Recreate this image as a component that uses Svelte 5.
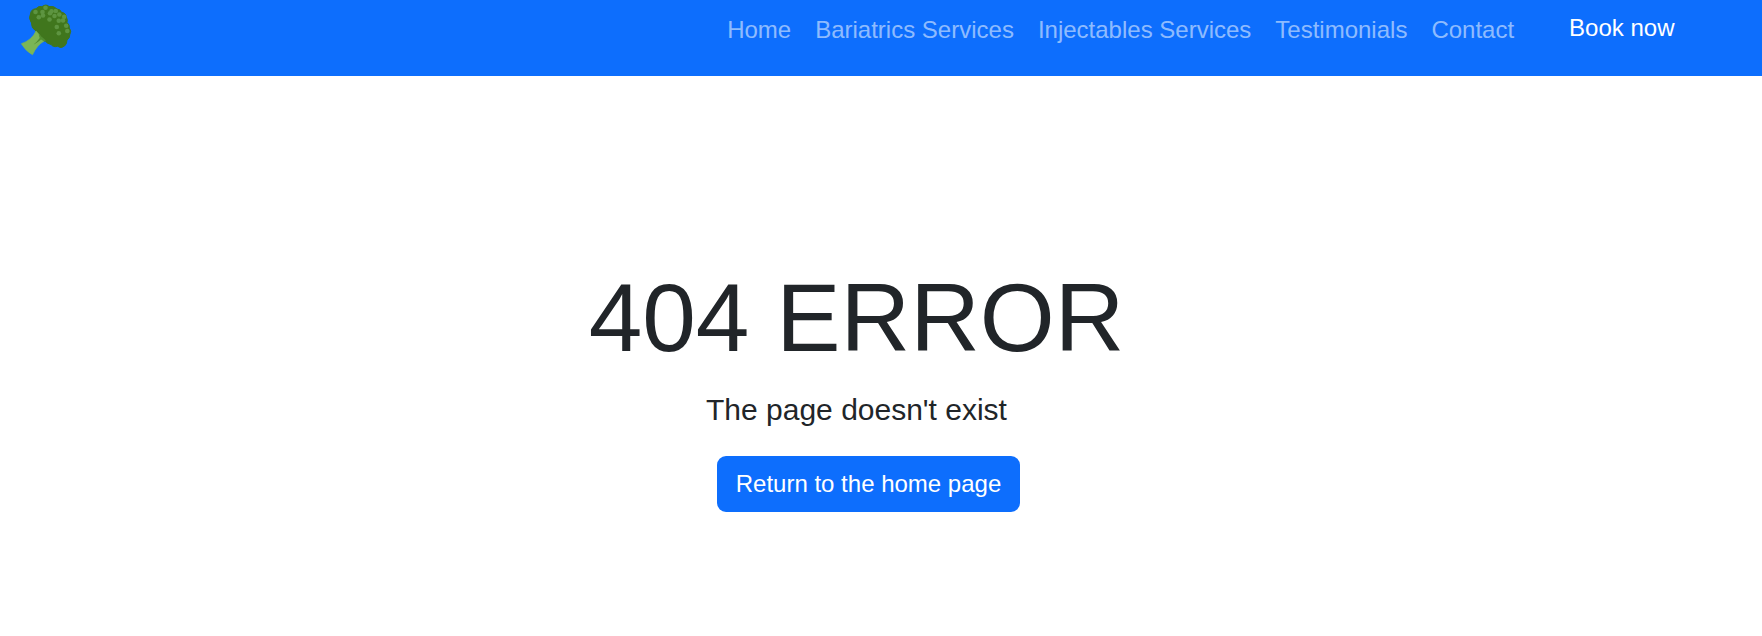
<script>
  const links = ['Home', 'Bariatrics Services', 'Injectables Services', 'Testimonials', 'Contact'];
  const florets = [[35.5,12],[42.5,12],[43,15.5],[38.8,17.3],[45.5,7.8],[50,13.2],[55.8,11],[54.5,16],[59.3,14.5],[64.2,16.8],[58.8,20.8],[63,20.5],[49.5,19.5],[56.8,27],[66.2,25.8],[67.3,31],[58.8,33.2],[51.5,11.2]];
</script>

<div class="page">
  <header>
    <a class="logo" href="#home" aria-label="Home">
      <svg viewBox="0 0 100 76" width="100" height="76" aria-hidden="true">
        <path class="crown" d="M36 31 Q31 28 31.5 23 Q28 18 30.5 14 Q31 9 36 8.7 Q39 5.5 42 6.7 Q46 3.5 49 6.5 Q54 5.5 57 9 Q60 9 61.5 12.3 Q66 13 66.3 17 Q68 20 67 22.5 Q70 25 69.3 28 Q72 31 69.8 34.5 Q70 38 67 40 Q67 44 64.5 46 Q61 49 57.5 46.3 Q53 47.5 51 44.5 Q47 43.5 45.5 41.3 Q39 41 36 31Z" />
        {#each florets as [x, y]}
          <circle cx={x} cy={y} r="2.3" />
        {/each}
        <path class="stem" d="M36 31 L38.7 34 Q41 37.5 44.2 41 Q37 45 32.5 54.8 Q26 51.5 21.3 43.7 Q32 40 36 31Z" />
        <path class="groove" d="M38.7 34.5 L39.7 38 Q37 42 33 45 Q38.5 42 41 39.5 L44 41.3 L46 40.5 L42 37 Z" />
      </svg>
    </a>
    <nav>
      {#each links as link}
        <a href="#{link}">{link}</a>
      {/each}
    </nav>
    <a class="book" href="#book">Book now</a>
  </header>
  <main>
    <h1>404 ERROR</h1>
    <p>The page doesn't exist</p>
    <a class="button" href="#home">Return to the home page</a>
  </main>
</div>

<style>
  :global(body) { margin: 0; background: #fff; }
  .page { min-height: 636px; overflow: hidden; color: #212529; font: 24px/36px Arial, "Liberation Sans", sans-serif; }
  a { text-decoration: none; white-space: nowrap; }
  header { display: flex; height: 76px; background: #0d6efd; }
  .logo { height: 76px; }
  svg { display: block; }
  .crown { fill: #40761d; stroke: #40761d; stroke-width: 1; }
  circle { fill: #5d9440; }
  .stem { fill: #7bb656; stroke: #7bb656; stroke-width: .6; }
  .groove { fill: #518c31; }
  nav { display: flex; gap: 24px; margin-left: auto; padding-top: 12px; }
  nav a { color: rgba(255, 255, 255, .55); }
  .book { color: #fff; margin: 10px 87.5px 0 55px; }
  main { display: flex; flex-direction: column; align-items: center; width: 1713px; padding-top: 184px; }
  h1 { margin: 0; font-size: 96.4px; line-height: 115px; font-weight: 400; }
  p { margin: 12px 0 0; font-size: 30px; line-height: 45px; }
  .button { box-sizing: border-box; width: 303px; height: 56px; margin: 24px 0 0 24px; padding: 10px 0; text-align: center; border-radius: 9px; background: #0d6efd; color: #fff; }
</style>
